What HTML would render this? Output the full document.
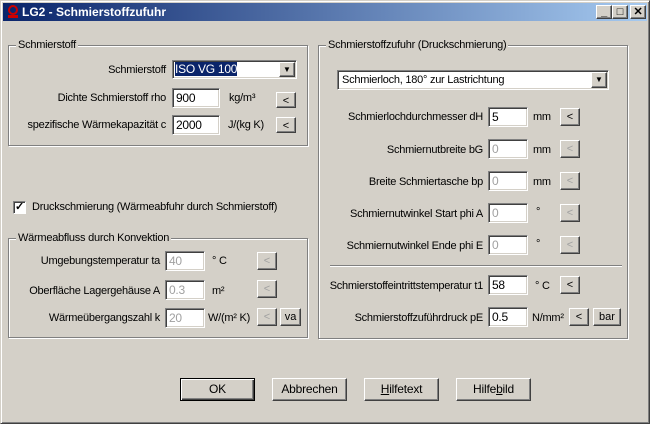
<!DOCTYPE html>
<html><head><meta charset="utf-8"><style>
*{box-sizing:border-box;margin:0;padding:0}
body{width:650px;height:424px;background:#d4d0c8;font-family:"Liberation Sans",sans-serif;font-size:11px;letter-spacing:-0.25px;color:#000;position:relative;overflow:hidden}
.win{position:absolute;left:0;top:0;width:650px;height:424px;border:1px solid;border-color:#d4d0c8 #404040 #404040 #d4d0c8;box-shadow:inset 1px 1px #fff,inset -1px -1px #808080}
.title{position:absolute;left:3px;top:3px;width:644px;height:18px;background:linear-gradient(to right,#0a246a,#a6caf0)}
.title span{position:absolute;left:19px;top:2px;color:#fff;font-weight:bold;font-size:12px;letter-spacing:0}
.a{position:absolute;white-space:nowrap}
.grp{position:absolute;border:1px solid #808080;box-shadow:1px 1px #fff,inset 1px 1px #fff}
.gl{position:absolute;top:-7px;left:7px;background:#d4d0c8;padding:0 2px;color:#000;white-space:nowrap}
.in{position:absolute;background:#fff;border:1px solid;border-color:#808080 #fff #fff #808080;box-shadow:inset 1px 1px #404040,inset -1px -1px #d4d0c8;padding:2px 0 0 3px;font-size:12px}
.in.d{background:#fff;color:#a0a0a0}
.btn{position:absolute;border:1px solid;border-color:#fff #404040 #404040 #fff;box-shadow:inset -1px -1px #808080;text-align:center;font-size:11px;line-height:16px;letter-spacing:0}
.btn.d{color:#a0a0a0}
.r{text-align:right}
.tb{position:absolute;top:5px;width:16px;height:14px;border:1px solid;border-color:#fff #404040 #404040 #fff;box-shadow:inset -1px -1px #808080;background:#d4d0c8;font-size:11px;font-weight:bold;text-align:center;line-height:12px}
.big{position:absolute;top:378px;width:75px;height:23px;border:1px solid;border-color:#fff #404040 #404040 #fff;box-shadow:inset -1px -1px #808080;text-align:center;line-height:21px;font-size:12px;letter-spacing:-0.2px}
</style></head><body>
<div class="win"></div>
<div class="title"><svg width="14" height="14" style="position:absolute;left:3px;top:2px"><circle cx="7" cy="5" r="4" fill="none" stroke="#c00" stroke-width="2"/><rect x="2" y="10" width="10" height="3" fill="#c00"/></svg><span>LG2 - Schmierstoffzufuhr</span></div>
<div class="tb" style="left:596px">_</div><div class="tb" style="left:612px">□</div><div class="tb" style="left:630px">✕</div>

<div class="grp" style="left:8px;top:45px;width:300px;height:101px"><span class="gl">Schmierstoff</span></div>
<div class="a r" style="left:20px;width:146px;top:64px">Schmierstoff</div>
<div class="in" style="left:172px;top:60px;width:125px;height:19px;padding:1px 0 0 2px"><span style="background:#0a246a;color:#fff">ISO VG 100</span></div>
<div class="btn" style="left:279px;top:62px;width:16px;height:15px;line-height:13px;background:#d4d0c8;font-size:8px">▼</div>
<div class="a r" style="left:20px;width:146px;top:92px">Dichte Schmierstoff rho</div>
<div class="in" style="left:172px;top:88px;width:48px;height:20px">900</div>
<div class="a" style="left:229px;top:92px">kg/m³</div>
<div class="btn" style="left:276px;top:92px;width:20px;height:16px">&lt;</div>
<div class="a r" style="left:20px;width:146px;top:119px">spezifische Wärmekapazität c</div>
<div class="in" style="left:172px;top:115px;width:48px;height:20px">2000</div>
<div class="a" style="left:228px;top:119px">J/(kg K)</div>
<div class="btn" style="left:276px;top:117px;width:20px;height:16px">&lt;</div>

<div style="position:absolute;left:13px;top:201px;width:13px;height:13px;background:#fff;border:1px solid;border-color:#808080 #fff #fff #808080;box-shadow:inset 1px 1px #404040;font-size:11px;line-height:11px;text-align:center;font-weight:bold">✓</div>
<div class="a" style="left:32px;top:201px">Druckschmierung (Wärmeabfuhr durch Schmierstoff)</div>

<div class="grp" style="left:8px;top:238px;width:300px;height:100px"><span class="gl">Wärmeabfluss durch Konvektion</span></div>
<div class="a r" style="left:10px;width:150px;top:255px">Umgebungstemperatur ta</div>
<div class="in d" style="left:165px;top:251px;width:40px;height:20px">40</div>
<div class="a" style="left:212px;top:255px">° C</div>
<div class="btn d" style="left:257px;top:252px;width:20px;height:18px">&lt;</div>
<div class="a r" style="left:10px;width:150px;top:285px">Oberfläche Lagergehäuse A</div>
<div class="in d" style="left:165px;top:280px;width:40px;height:20px">0.3</div>
<div class="a" style="left:212px;top:285px">m²</div>
<div class="btn d" style="left:257px;top:280px;width:20px;height:18px">&lt;</div>
<div class="a r" style="left:10px;width:150px;top:312px">Wärmeübergangszahl k</div>
<div class="in d" style="left:165px;top:308px;width:40px;height:20px">20</div>
<div class="a" style="left:208px;top:312px">W/(m² K)</div>
<div class="btn d" style="left:257px;top:308px;width:20px;height:18px">&lt;</div>
<div class="btn" style="left:280px;top:308px;width:21px;height:18px">va</div>

<div class="grp" style="left:318px;top:45px;width:310px;height:294px"><span class="gl">Schmierstoffzufuhr (Druckschmierung)</span></div>
<div class="in" style="left:337px;top:70px;width:272px;height:20px;padding:3px 0 0 4px;font-size:11px">Schmierloch, 180° zur Lastrichtung</div>
<div class="btn" style="left:591px;top:72px;width:16px;height:16px;line-height:14px;background:#d4d0c8;font-size:8px">▼</div>

<div class="a r" style="left:330px;width:153px;top:111px">Schmierlochdurchmesser dH</div>
<div class="in" style="left:488px;top:107px;width:40px;height:20px">5</div>
<div class="a" style="left:533px;top:111px">mm</div>
<div class="btn" style="left:560px;top:108px;width:20px;height:18px">&lt;</div>
<div class="a r" style="left:330px;width:153px;top:144px">Schmiernutbreite bG</div>
<div class="in d" style="left:488px;top:139px;width:40px;height:20px">0</div>
<div class="a" style="left:533px;top:144px">mm</div>
<div class="btn d" style="left:560px;top:140px;width:20px;height:18px">&lt;</div>
<div class="a r" style="left:330px;width:153px;top:176px">Breite Schmiertasche bp</div>
<div class="in d" style="left:488px;top:171px;width:40px;height:20px">0</div>
<div class="a" style="left:533px;top:176px">mm</div>
<div class="btn d" style="left:560px;top:172px;width:20px;height:18px">&lt;</div>
<div class="a r" style="left:330px;width:153px;top:208px">Schmiernutwinkel Start phi A</div>
<div class="in d" style="left:488px;top:203px;width:40px;height:20px">0</div>
<div class="a" style="left:536px;top:206px">°</div>
<div class="btn d" style="left:560px;top:204px;width:20px;height:18px">&lt;</div>
<div class="a r" style="left:330px;width:153px;top:240px">Schmiernutwinkel Ende phi E</div>
<div class="in d" style="left:488px;top:235px;width:40px;height:20px">0</div>
<div class="a" style="left:536px;top:238px">°</div>
<div class="btn d" style="left:560px;top:236px;width:20px;height:18px">&lt;</div>

<div style="position:absolute;left:330px;top:265px;width:292px;height:2px;border-top:1px solid #808080;border-bottom:1px solid #fff"></div>

<div class="a r" style="left:320px;width:163px;top:280px">Schmierstoffeintrittstemperatur t1</div>
<div class="in" style="left:488px;top:275px;width:40px;height:20px">58</div>
<div class="a" style="left:535px;top:280px">° C</div>
<div class="btn" style="left:560px;top:276px;width:20px;height:18px">&lt;</div>
<div class="a r" style="left:320px;width:163px;top:312px">Schmierstoffzuführdruck pE</div>
<div class="in" style="left:488px;top:307px;width:40px;height:20px">0.5</div>
<div class="a" style="left:532px;top:312px">N/mm²</div>
<div class="btn" style="left:569px;top:308px;width:20px;height:18px">&lt;</div>
<div class="btn" style="left:593px;top:308px;width:28px;height:18px">bar</div>

<div class="big" style="left:180px;border:1px solid #000;box-shadow:inset 1px 1px #fff,inset -1px -1px #404040,inset -2px -2px #808080">OK</div>
<div class="big" style="left:272px">Abbrechen</div>
<div class="big" style="left:364px"><u>H</u>ilfetext</div>
<div class="big" style="left:456px">Hilfe<u>b</u>ild</div>
</body></html>
